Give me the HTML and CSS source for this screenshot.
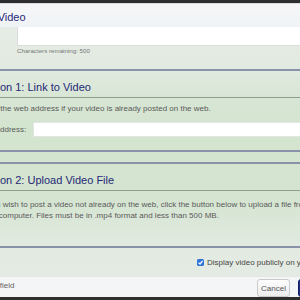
FILE: index.html
```html
<!DOCTYPE html>
<html lang="en">
<head>
    <meta charset="UTF-8">
    <title>Add Video</title>
    <link rel="stylesheet" href="styles.css">
</head>
<body>
    <div class="dialog">
        <div class="dialogHeader">
            <h2 class="dialogTitle">Add Video</h2>
        </div>
        <div class="dialogBody">
            <textarea class="description"></textarea>
            <div class="charCount">Characters remaining: 500</div>

            <div class="section">
                <h3 class="sectionTitle">Section 1: Link to Video</h3>
                <p class="hint">Enter the web address if your video is already posted on the web.</p>
                <div class="inputRow">
                    <label for="videoUrl">Web address:</label>
                    <input type="text" id="videoUrl">
                </div>
            </div>

            <div class="section upload">
                <h3 class="sectionTitle">Section 2: Upload Video File</h3>
                <p class="hint">If you wish to post a video not already on the web, click the button below to upload a file from your computer. Files must be in .mp4 format and less than 500 MB.</p>
            </div>

            <div class="publishRow">
                <span class="checkbox">
                    <svg width="7" height="7" viewBox="0 0 7 7"><path d="M1.5 3.6 L3 5 L5.6 1.8" fill="none" stroke="#fff" stroke-width="1.2"/></svg>
                </span>
                Display video publicly on your profile
            </div>
        </div>
        <div class="dialogFooter">
            <span class="requiredNote">Required field</span>
            <div class="buttons">
                <button class="btn">Cancel</button>
                <button class="btn btnPrimary">Save Video</button>
            </div>
        </div>
    </div>
</body>
</html>
```

FILE: styles.css
```css
body {
    margin: 0;
    background-color: rgb(46, 46, 46);
    font-family: 'Liberation Sans', Arial, sans-serif;
    overflow: hidden;
}

.dialog {
    width: 400px;
    margin-top: 3px;
    margin-left: -35px;
    border-top: 1px solid rgb(217, 221, 225);
}

.dialogHeader {
    height: 20px;
    padding: 3px 12px 0 10px;
    background: linear-gradient(rgb(245, 246, 248), rgb(240, 243, 245));
}
.dialogTitle {
    margin: 0;
    font-size: 11px;
    font-weight: normal;
    line-height: 20px;
    color: rgb(37, 40, 122);
}

.dialogBody {
    padding: 0 12px;
    background: linear-gradient(rgb(230, 236, 230) 0px, rgb(225, 234, 224) 40px, rgb(216, 230, 213) 70px, rgb(211, 228, 207) 100px, rgb(212, 228, 208) 170px, rgb(226, 234, 225) 220px, rgb(228, 235, 228) 249px);
}

.description {
    display: block;
    box-sizing: border-box;
    width: calc(100% - 40px);
    height: 19px;
    margin: 0 0 0 40px;
    padding: 0;
    border: 1px solid rgb(218, 221, 218);
    border-top: none;
    background-color: white;
    resize: none;
}
.charCount {
    margin: 1px 0 0 40px;
    font-size: 6.2px;
    line-height: 8px;
    color: rgb(120, 120, 120);
}

.section {
    margin-top: 14px;
    padding-bottom: 13px;
    border-top: 2px solid rgb(138, 146, 169);
    border-bottom: 2px solid rgb(138, 146, 169);
}
.upload {
    margin-top: 10px;
    padding-bottom: 25px;
}
.sectionTitle {
    margin: 0 0 0 -1.5px;
    padding: 9px 0 3px;
    font-size: 11px;
    font-weight: normal;
    line-height: 14px;
    color: rgb(36, 40, 118);
    border-bottom: 1px solid rgb(142, 157, 140);
}
.hint {
    margin: 6px 0 0 2px;
    font-size: 8px;
    line-height: 10px;
    color: rgb(90, 90, 90);
}
.upload .hint {
    width: 335px;
    margin: 8px 0 0 4px;
    line-height: 11px;
}

.inputRow {
    display: flex;
    align-items: center;
    gap: 7px;
    margin-top: 8px;
    font-size: 8px;
    color: rgb(90, 90, 90);
}
.inputRow input {
    flex: 1;
    height: 15px;
    box-sizing: border-box;
    border: 1px solid rgb(226, 230, 226);
    background-color: white;
}

.publishRow {
    display: flex;
    align-items: center;
    height: 28px;
    padding-left: 220px;
    font-size: 8px;
    color: rgb(70, 70, 70);
    white-space: nowrap;
}
.checkbox {
    display: flex;
    width: 7px;
    height: 7px;
    margin-right: 3px;
    border-radius: 1.5px;
    background-color: rgb(47, 116, 216);
}

.dialogFooter {
    display: flex;
    align-items: flex-start;
    height: 20px;
    padding: 0 12px 0 0;
    border-top: 1px solid rgb(228, 231, 231);
    background-color: rgb(244, 245, 246);
}
.requiredNote {
    margin-top: 4px;
    font-size: 8px;
    line-height: 10px;
    color: rgb(100, 100, 100);
}
.buttons {
    display: flex;
    gap: 8px;
    margin-left: auto;
    margin-top: 2px;
}
.btn {
    width: 33px;
    height: 18px;
    padding: 0;
    font-family: 'Liberation Sans', Arial, sans-serif;
    font-size: 8px;
    color: rgb(85, 85, 85);
    border: 1px solid rgb(201, 201, 201);
    border-radius: 3px;
    background: linear-gradient(rgb(253, 253, 253), rgb(236, 236, 236));
}
.btnPrimary {
    width: 55px;
    color: white;
    border-color: rgb(21, 32, 106);
    background: rgb(29, 43, 128);
}
```
